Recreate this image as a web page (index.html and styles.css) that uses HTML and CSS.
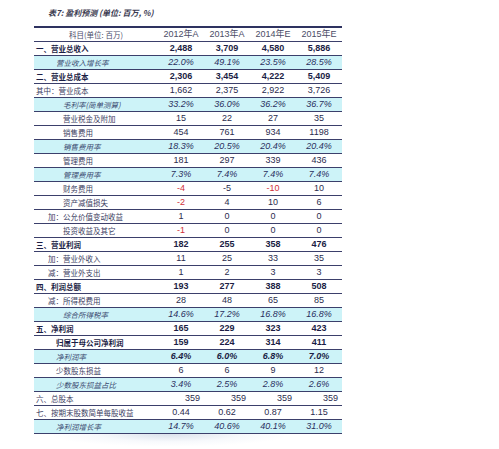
FILE: index.html
```html
<!DOCTYPE html>
<html lang="zh">
<head>
<meta charset="utf-8">
<link rel="stylesheet" href="styles.css">
</head>
<body>
<div class="page">
  <div class="title">表7: 盈利预测 (单位: 百万, %)</div>
  <table class="fin">
    <colgroup><col class="c-label"><col class="c-num"><col class="c-num"><col class="c-num"><col class="c-num"></colgroup>
    <thead>
      <tr class="head"><th class="lbl-h">科目(单位: 百万)</th><th>2012年A</th><th>2013年A</th><th>2014年E</th><th>2015年E</th></tr>
    </thead>
    <tbody>
      <tr class="sec"><td class="i0">一、营业总收入</td><td>2,488</td><td>3,709</td><td>4,580</td><td>5,886</td></tr>
      <tr class="rate"><td class="i2">营业收入增长率</td><td>22.0%</td><td>49.1%</td><td>23.5%</td><td>28.5%</td></tr>
      <tr class="sec"><td class="i0">二、营业总成本</td><td>2,306</td><td>3,454</td><td>4,222</td><td>5,409</td></tr>
      <tr><td class="i0">其中：营业成本</td><td>1,662</td><td>2,375</td><td>2,922</td><td>3,726</td></tr>
      <tr class="rate"><td class="i3">毛利率(简单测算)</td><td>33.2%</td><td>36.0%</td><td>36.2%</td><td>36.7%</td></tr>
      <tr><td class="i3">营业税金及附加</td><td>15</td><td>22</td><td>27</td><td>35</td></tr>
      <tr><td class="i3">销售费用</td><td>454</td><td>761</td><td>934</td><td>1198</td></tr>
      <tr class="rate"><td class="i3">销售费用率</td><td>18.3%</td><td>20.5%</td><td>20.4%</td><td>20.4%</td></tr>
      <tr><td class="i3">管理费用</td><td>181</td><td>297</td><td>339</td><td>436</td></tr>
      <tr class="rate"><td class="i3">管理费用率</td><td>7.3%</td><td>7.4%</td><td>7.4%</td><td>7.4%</td></tr>
      <tr><td class="i3">财务费用</td><td class="neg">-4</td><td>-5</td><td class="neg">-10</td><td>10</td></tr>
      <tr><td class="i3">资产减值损失</td><td class="neg">-2</td><td>4</td><td>10</td><td>6</td></tr>
      <tr><td class="i1">加：公允价值变动收益</td><td>1</td><td>0</td><td>0</td><td>0</td></tr>
      <tr><td class="i3">投资收益及其它</td><td class="neg">-1</td><td>0</td><td>0</td><td>0</td></tr>
      <tr class="sec"><td class="i0">三、营业利润</td><td>182</td><td>255</td><td>358</td><td>476</td></tr>
      <tr><td class="i1">加：营业外收入</td><td>11</td><td>25</td><td>33</td><td>35</td></tr>
      <tr><td class="i1">减：营业外支出</td><td>1</td><td>2</td><td>3</td><td>3</td></tr>
      <tr class="sec"><td class="i0">四、利润总额</td><td>193</td><td>277</td><td>388</td><td>508</td></tr>
      <tr><td class="i1">减：所得税费用</td><td>28</td><td>48</td><td>65</td><td>85</td></tr>
      <tr class="rate"><td class="i3">综合所得税率</td><td>14.6%</td><td>17.2%</td><td>16.8%</td><td>16.8%</td></tr>
      <tr class="sec"><td class="i0">五、净利润</td><td>165</td><td>229</td><td>323</td><td>423</td></tr>
      <tr class="sec"><td class="i2">归属于母公司净利润</td><td>159</td><td>224</td><td>314</td><td>411</td></tr>
      <tr class="rate strong"><td class="i2">净利润率</td><td>6.4%</td><td>6.0%</td><td>6.8%</td><td>7.0%</td></tr>
      <tr><td class="i2">少数股东损益</td><td>6</td><td>6</td><td>9</td><td>12</td></tr>
      <tr class="rate"><td class="i2">少数股东损益占比</td><td>3.4%</td><td>2.5%</td><td>2.8%</td><td>2.6%</td></tr>
      <tr class="right"><td class="i0">六、总股本</td><td>359</td><td>359</td><td>359</td><td>359</td></tr>
      <tr><td class="i0">七、按期末股数简单每股收益</td><td>0.44</td><td>0.62</td><td>0.87</td><td>1.15</td></tr>
      <tr class="rate"><td class="i2">净利润增长率</td><td>14.7%</td><td>40.6%</td><td>40.1%</td><td>31.0%</td></tr>
    </tbody>
  </table>
  <div class="shadow"></div>
</div>
</body>
</html>
```

FILE: styles.css
```css
html, body {
  margin: 0;
  padding: 0;
  background: #ffffff;
}

.page {
  padding: 7px 0 0 34px;
  font-family: "Liberation Sans", Arial, "Noto Sans CJK SC", sans-serif;
  color: #2a2c4e;
}

.title {
  margin-left: 14px;
  height: 19px;
  font-family: "Noto Sans CJK SC", sans-serif;
  font-size: 8px;
  font-weight: bold;
  font-style: italic;
  color: #3a3a50;
  line-height: 11px;
}

.fin {
  border-collapse: collapse;
  table-layout: fixed;
  width: 308px;
  border-top: 2px solid #2e3260;
}

.c-label { width: 124px; }
.c-num { width: 46px; }

.fin th,
.fin td {
  height: 13px;
  padding: 0;
  border-bottom: 1px solid #3b3f6b;
  text-align: center;
  font-size: 9px;
  line-height: 13px;
  white-space: nowrap;
  overflow: hidden;
}

.fin th {
  font-weight: normal;
  color: #4a4c66;
  font-size: 9px;
}

.fin th.lbl-h {
  font-family: "Noto Sans CJK SC", sans-serif;
  font-size: 7.5px;
  color: #4a4c6a;
}

.fin td:first-child {
  text-align: left;
  font-family: "Noto Sans CJK SC", sans-serif;
  font-size: 7.5px;
  color: #3c3e62;
}

.i0 { padding-left: 2px !important; }
.i1 { padding-left: 14px !important; }
.i2 { padding-left: 22px !important; }
.i3 { padding-left: 29px !important; }

.sec td {
  font-weight: bold;
  color: #1b1d45;
}

.sec td:first-child {
  color: #1b1d45;
}

.rate td {
  background: #cdf3f8;
  font-style: italic;
  color: #2a2f5e;
}

.rate td:first-child {
  font-style: italic;
  color: #3a4a70;
}

.strong td {
  font-weight: bold;
  color: #1b1d45;
}

.strong td:first-child {
  font-weight: normal;
}

.right td + td {
  text-align: right;
  padding-right: 4px;
}

.fin td.neg {
  color: #d0303a;
}

.shadow {
  width: 230px;
  height: 12px;
  margin-left: 20px;
  background: radial-gradient(ellipse at 50% 0%, rgba(150, 170, 200, 0.35) 0%, rgba(200, 215, 235, 0.15) 45%, rgba(255, 255, 255, 0) 75%);
}
```
